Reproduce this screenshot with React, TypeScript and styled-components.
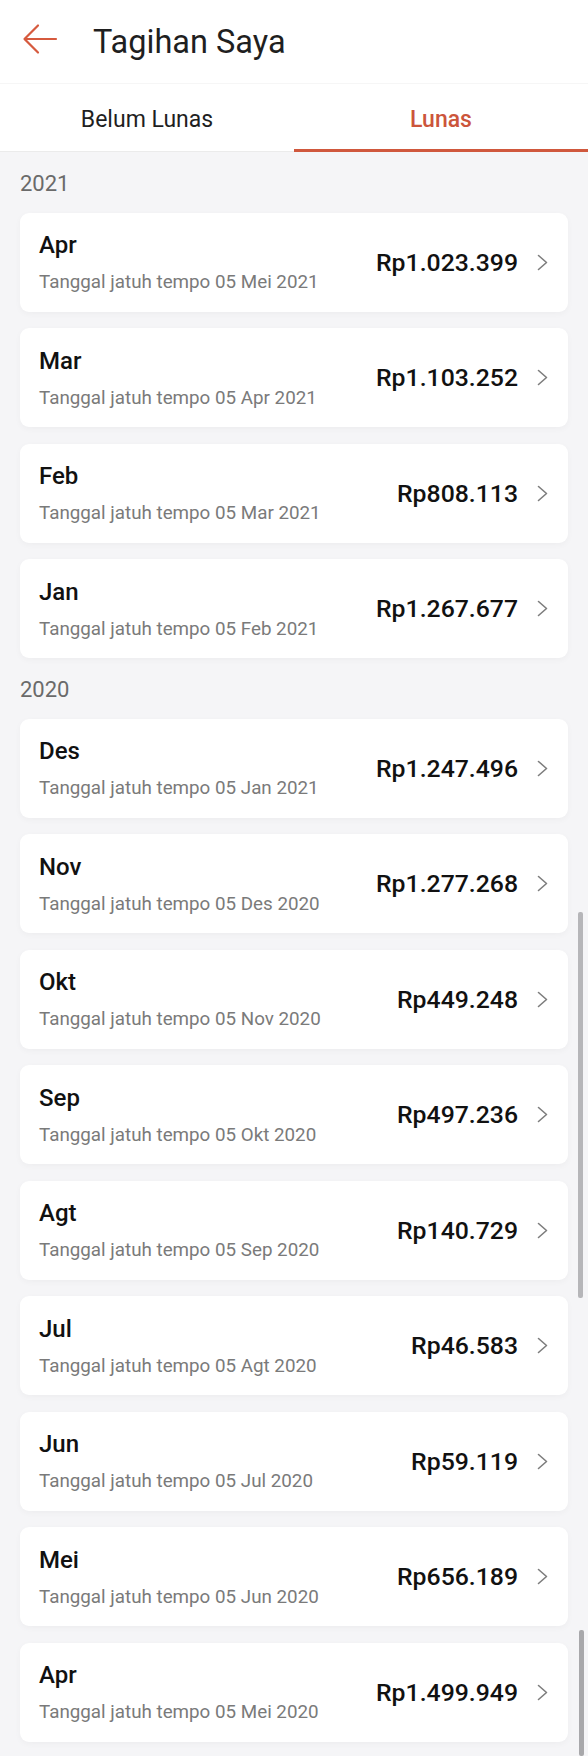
import React from "react";
import styled, { createGlobalStyle } from "styled-components";

const GlobalStyle = createGlobalStyle`
  html, body {
    margin: 0;
    padding: 0;
    background: #f5f5f7;
    font-family: Roboto, "Noto Sans", "Liberation Sans", sans-serif;
    -webkit-font-smoothing: antialiased;
  }
  * { box-sizing: border-box; }
`;

const Page = styled.div`
  position: relative;
  min-height: 1756px;
  background: #f5f5f7;
  padding-bottom: 14px;
`;

const Header = styled.header`
  height: 83px;
  display: flex;
  align-items: center;
  padding-left: 22px;
  background: #ffffff;
`;

const BackIcon = styled.svg`
  width: 36px;
  height: 32px;
  margin-bottom: 5px;
  flex: none;
`;

const Title = styled.h1`
  margin: 0 0 0 35px;
  font-size: 32.5px;
  font-weight: 400;
  color: #1f1f1f;
`;

const TabBar = styled.nav`
  display: grid;
  grid-template-columns: 1fr 1fr;
  height: 69px;
  background: #ffffff;
  border-top: 1px solid #f6f6f6;
  border-bottom: 1px solid #ebebeb;
`;

const Tab = styled.div<{ $active?: boolean }>`
  display: flex;
  align-items: center;
  justify-content: center;
  padding-top: 6px;
  font-size: 23px;
  font-weight: ${(p) => (p.$active ? 500 : 400)};
  color: ${(p) => (p.$active ? "#cc553b" : "#1f1f1f")};
  border-bottom: 3px solid ${(p) => (p.$active ? "#d0583d" : "transparent")};
  margin-bottom: -1px;
`;

const Content = styled.main`
  padding: 0 20px;
`;

const YearLabel = styled.div`
  padding: 19px 0 15.5px;
  font-size: 22px;
  line-height: 26px;
  color: #6a6a6a;
`;

const CardList = styled.div`
  display: flex;
  flex-direction: column;
  gap: 16.5px;
`;

const Card = styled.div`
  height: 99px;
  display: flex;
  align-items: center;
  padding: 0 20px 0 19px;
  background: #ffffff;
  border-radius: 9px;
  box-shadow: 0 2px 6px rgba(0, 0, 0, 0.035);
`;

const Info = styled.div`
  flex: 1;
  display: flex;
  flex-direction: column;
  min-width: 0;
`;

const Month = styled.div`
  font-size: 24px;
  line-height: 28px;
  font-weight: 500;
  color: #111111;
`;

const Due = styled.div`
  margin-top: 12px;
  font-size: 18.8px;
  line-height: 22px;
  color: #7a7a7a;
  white-space: nowrap;
`;

const Amount = styled.div`
  font-size: 24.8px;
  font-weight: 500;
  color: #111111;
  white-space: nowrap;
`;

const Chevron = styled.svg`
  width: 11px;
  height: 17px;
  margin-left: 19px;
  flex: none;
`;

const ScrollThumb = styled.div<{ $top: number; $height: number; $right: number; $color: string }>`
  position: absolute;
  top: ${(p) => p.$top}px;
  right: ${(p) => p.$right}px;
  width: 5px;
  height: ${(p) => p.$height}px;
  background: ${(p) => p.$color};
  border-radius: 2px;
`;

type Bill = { month: string; due: string; amount: string };

const sections: { year: string; bills: Bill[] }[] = [
  {
    year: "2021",
    bills: [
      { month: "Apr", due: "05 Mei 2021", amount: "Rp1.023.399" },
      { month: "Mar", due: "05 Apr 2021", amount: "Rp1.103.252" },
      { month: "Feb", due: "05 Mar 2021", amount: "Rp808.113" },
      { month: "Jan", due: "05 Feb 2021", amount: "Rp1.267.677" },
    ],
  },
  {
    year: "2020",
    bills: [
      { month: "Des", due: "05 Jan 2021", amount: "Rp1.247.496" },
      { month: "Nov", due: "05 Des 2020", amount: "Rp1.277.268" },
      { month: "Okt", due: "05 Nov 2020", amount: "Rp449.248" },
      { month: "Sep", due: "05 Okt 2020", amount: "Rp497.236" },
      { month: "Agt", due: "05 Sep 2020", amount: "Rp140.729" },
      { month: "Jul", due: "05 Agt 2020", amount: "Rp46.583" },
      { month: "Jun", due: "05 Jul 2020", amount: "Rp59.119" },
      { month: "Mei", due: "05 Jun 2020", amount: "Rp656.189" },
      { month: "Apr", due: "05 Mei 2020", amount: "Rp1.499.949" },
    ],
  },
];

export default function App() {
  return (
    <Page>
      <GlobalStyle />
      <Header>
        <BackIcon viewBox="0 0 36 32" fill="none">
          <path
            d="M2.5 16H34M16 2.5L2.5 16L16 29.5"
            stroke="#d65a3e"
            strokeWidth="2.2"
            strokeLinecap="round"
            strokeLinejoin="round"
          />
        </BackIcon>
        <Title>Tagihan Saya</Title>
      </Header>
      <TabBar>
        <Tab>Belum Lunas</Tab>
        <Tab $active>Lunas</Tab>
      </TabBar>
      <Content>
        {sections.map((s) => (
          <section key={s.year}>
            <YearLabel>{s.year}</YearLabel>
            <CardList>
              {s.bills.map((b) => (
                <Card key={s.year + b.month}>
                  <Info>
                    <Month>{b.month}</Month>
                    <Due>Tanggal jatuh tempo {b.due}</Due>
                  </Info>
                  <Amount>{b.amount}</Amount>
                  <Chevron viewBox="0 0 11 17" fill="none">
                    <path
                      d="M1.5 1.5L9.5 8.5L1.5 15.5"
                      stroke="#7d7d7d"
                      strokeWidth="1.6"
                      strokeLinecap="round"
                      strokeLinejoin="round"
                    />
                  </Chevron>
                </Card>
              ))}
            </CardList>
          </section>
        ))}
      </Content>
      <ScrollThumb $top={912} $height={386} $right={5} $color="#b6b6b9" />
      <ScrollThumb $top={1630} $height={126} $right={4} $color="#a8a8ab" />
    </Page>
  );
}
